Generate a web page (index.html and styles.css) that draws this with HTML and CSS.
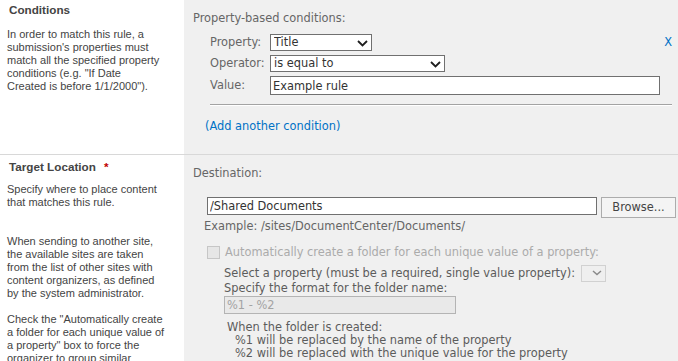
FILE: index.html
```html
<!DOCTYPE html>
<html lang="en">
<head>
    <meta charset="UTF-8">
    <meta name="viewport" content="width=device-width, initial-scale=1.0">
    <title>Content Organizer Rule</title>
    <link rel="stylesheet" href="styles.css">
</head>
<body>
    <div class="section">
        <div class="desc">
            <h3 class="desc-title">Conditions</h3>
            <div class="desc-text">In order to match this rule, a submission's properties must match all the specified property conditions (e.g. "If Date Created&nbsp;is before 1/1/2000").</div>
        </div>
        <div class="controls">
            <div class="caption">Property-based conditions:</div>
            <div class="conditions">
                <div class="cond-row">
                    <label class="cond-label" for="condProperty">Property:</label>
                    <div class="select-wrap select-property">
                        <select id="condProperty" class="select"><option>Title</option></select>
                        <svg class="chevron" width="11" height="7" viewBox="0 0 11 7"><path d="M1 1 L5.5 5.5 L10 1" fill="none" stroke="#1e1e1e" stroke-width="1.8"/></svg>
                    </div>
                    <a href="#" class="remove-link">X</a>
                </div>
                <div class="cond-row">
                    <label class="cond-label" for="condOperator">Operator:</label>
                    <div class="select-wrap select-operator">
                        <select id="condOperator" class="select"><option>is equal to</option></select>
                        <svg class="chevron" width="11" height="7" viewBox="0 0 11 7"><path d="M1 1 L5.5 5.5 L10 1" fill="none" stroke="#1e1e1e" stroke-width="1.8"/></svg>
                    </div>
                </div>
                <div class="cond-row">
                    <label class="cond-label" for="condValue">Value:</label>
                    <input type="text" id="condValue" class="text-input value-input" value="Example rule">
                </div>
                <div class="cond-line"></div>
            </div>
            <a href="#" class="add-link">(Add another condition)</a>
        </div>
    </div>

    <div class="section">
        <div class="desc desc-target">
            <h3 class="desc-title">Target Location <span class="required">*</span></h3>
            <div class="desc-text">
                <p>Specify where to place content that matches this rule.</p>
                <p class="gap-2">When sending to another site, the available sites are taken from the list of other sites with content organizers, as defined by the system administrator.</p>
                <p class="gap-1">Check the "Automatically create a folder for each unique value of a property" box to force the organizer to group similar documents together.</p>
            </div>
        </div>
        <div class="controls">
            <div class="caption">Destination:</div>
            <div class="dest-row">
                <input type="text" class="text-input dest-input" value="/Shared Documents">
                <button type="button" class="browse-btn">Browse...</button>
            </div>
            <div class="example">Example: /sites/DocumentCenter/Documents/</div>
            <div class="check-row">
                <input type="checkbox" id="autoFolder" class="checkbox" disabled>
                <label for="autoFolder" class="check-label">Automatically create a folder for each unique value of a property:</label>
            </div>
            <div class="folder-options">
                <div class="folder-prop">
                    <span>Select a property (must be a required, single value property):</span>
                    <div class="select-wrap select-small">
                        <select class="select" disabled><option></option></select>
                        <svg class="chevron" width="10" height="6" viewBox="0 0 10 6"><path d="M1 1 L5 4.5 L9 1" fill="none" stroke="#8a8a8a" stroke-width="1.5"/></svg>
                    </div>
                </div>
                <div>Specify the format for the folder name:</div>
                <input type="text" class="text-input format-input" value="%1 - %2" disabled>
                <div class="folder-help">
                    <div>When the folder is created:</div>
                    <div class="help-item">%1 will be replaced by the name of the property</div>
                    <div class="help-item">%2 will be replaced with the unique value for the property</div>
                </div>
            </div>
        </div>
    </div>
</body>
</html>
```

FILE: styles.css
```css
body {
    margin: 0;
    font-family: "Liberation Sans", Arial, sans-serif;
    background: #fff;
}
.section {
    display: grid;
    grid-template-columns: 184px 1fr;
    border-bottom: 1px solid #d8d8d8;
}
.desc {
    padding: 3px 18px 0 7px;
    color: #444;
    font-size: 11px;
    line-height: 13px;
}
.desc-title {
    margin: 0 0 0 2px;
    font-size: 11.7px;
    line-height: 14px;
    color: #444;
}
.required {
    color: #bf0000;
    margin-left: 5px;
}
.desc-text {
    margin-top: 11px;
}
.desc-target {
    padding-top: 5px;
}
.desc-target .desc-text {
    margin-top: 9px;
}
.desc-text p {
    margin: 0;
}
.desc-text .gap-2 {
    margin-top: 26px;
}
.desc-text .gap-1 {
    margin-top: 13px;
}
.controls {
    background: #f0f0f0;
    padding: 12px 6px 21px 9px;
    font-family: "DejaVu Sans", Verdana, sans-serif;
    font-size: 11.4px;
    line-height: 13px;
    color: #666;
}
.conditions {
    margin: 9px 0 0 17px;
}
.cond-row {
    display: flex;
    align-items: center;
    margin-bottom: 4px;
}
.cond-label {
    width: 60px;
}
.select-wrap {
    position: relative;
    height: 17px;
}
.select {
    appearance: none;
    -webkit-appearance: none;
    width: 100%;
    height: 100%;
    box-sizing: border-box;
    margin: 0;
    padding: 0 0 0 3px;
    border: 1px solid #707070;
    border-radius: 0;
    background: #fff;
    font: inherit;
    color: #333;
}
.chevron {
    position: absolute;
    right: 4px;
    top: 6px;
}
.select-property {
    width: 102px;
}
.select-operator {
    width: 175px;
}
.remove-link {
    margin-left: auto;
    color: #0072c6;
    text-decoration: none;
}
.text-input {
    box-sizing: border-box;
    margin: 0;
    padding: 0 2px;
    border: 1px solid #707070;
    background: #fff;
    font: inherit;
    color: #333;
}
.value-input {
    width: 390px;
    height: 19px;
}
.cond-line {
    margin-top: 9px;
    height: 0;
    border-top: 1px solid #a3a3a3;
    border-bottom: 1px solid #fff;
}
.add-link {
    display: inline-block;
    margin: 14px 0 0 12px;
    color: #0072c6;
    text-decoration: none;
}
.dest-row {
    display: flex;
    align-items: flex-start;
    gap: 4px;
    margin: 17px 0 0 14px;
}
.dest-input {
    width: 390px;
    height: 18px;
}
.browse-btn {
    width: 75px;
    height: 21px;
    padding: 0;
    border: 1px solid #acacac;
    background: #f4f4f4;
    font: inherit;
    color: #444;
}
.example {
    margin: 2px 0 0 11px;
}
.check-row {
    display: flex;
    align-items: center;
    margin: 13px 0 0 14px;
    color: #ababab;
}
.checkbox {
    appearance: none;
    -webkit-appearance: none;
    width: 13px;
    height: 13px;
    margin: 0 5px 0 0;
    border: 1px solid #c6c6c6;
    background: #e6e6e6;
}
.folder-options {
    margin: 6px 0 0 31px;
    color: #5c5c5c;
}
.folder-prop {
    display: flex;
    align-items: center;
    gap: 6px;
}
.select-small {
    width: 25px;
}
.select-small .select {
    border-color: #c4c4c4;
    background: #efefef;
}
.select-small .chevron {
    right: 4px;
    top: 5px;
}
.format-input {
    width: 232px;
    height: 18px;
    margin-top: 1px;
    border-color: #b4b4b4;
    background: #e9e9e9;
    color: #a3a3a3;
}
.folder-help {
    margin: 7px 0 0 3px;
}
.help-item {
    padding-left: 8px;
}
```
